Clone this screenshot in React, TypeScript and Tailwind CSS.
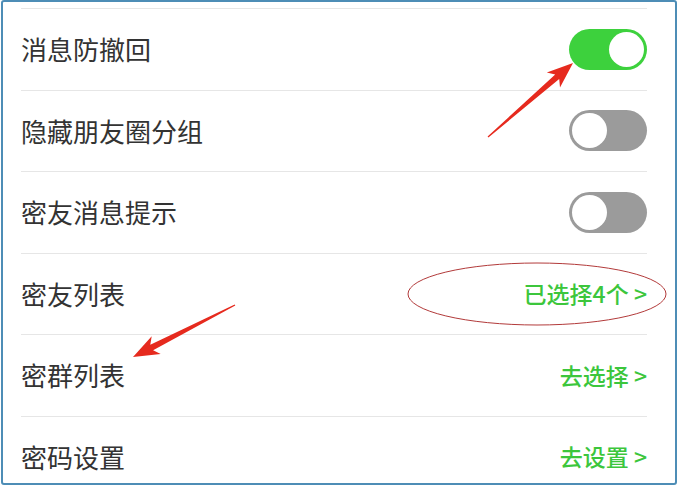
import React from 'react';

type Row = {
  label: string;
  toggle?: boolean;
  action?: string;
};

const rows: Row[] = [
  { label: '消息防撤回', toggle: true },
  { label: '隐藏朋友圈分组', toggle: false },
  { label: '密友消息提示', toggle: false },
  { label: '密友列表', action: '已选择4个' },
  { label: '密群列表', action: '去选择' },
  { label: '密码设置', action: '去设置' },
];

const Toggle: React.FC<{ on: boolean }> = ({ on }) =>
  on ? (
    <div className="w-[78px] h-[41px] rounded-full bg-[#3dd13d] flex items-center justify-end pr-[3px]">
      <div className="w-[35px] h-[35px] rounded-full bg-white" />
    </div>
  ) : (
    <div className="w-[78px] h-[41px] rounded-full bg-[#9b9b9b] flex items-center justify-start pl-[3px]">
      <div className="w-[35px] h-[35px] rounded-full bg-white" />
    </div>
  );

export default function App() {
  return (
    <div className="w-[678px] h-[487px] bg-white overflow-hidden">
      <div
        className="relative w-[676px] h-[485px] ml-[1px] border-2 border-[#4d8db6] rounded-[3px] overflow-hidden pt-[6px] pl-[18px] pr-[28px]"
        style={{ fontFamily: '"Noto Sans CJK SC", "Noto Sans", sans-serif' }}
      >
        {rows.map((r) => (
          <div
            key={r.label}
            className="h-[81.5px] border-t border-[#e6e6e6] flex items-center justify-between"
          >
            <span className="text-[26px] text-[#333333] leading-none">{r.label}</span>
            {r.toggle !== undefined ? (
              <Toggle on={r.toggle} />
            ) : (
              <span className="text-[23px] font-medium text-[#3cc63c] leading-none">
                {r.action} &gt;
              </span>
            )}
          </div>
        ))}

        <svg
          className="absolute left-[-2px] top-[-2px] pointer-events-none"
          width="678"
          height="487"
          viewBox="0 0 678 487"
        >
          <ellipse cx="536" cy="294" rx="129" ry="31" fill="none" stroke="#b23a3a" strokeWidth="1" />
          <polygon
            points="487.4,137.5 558.2,79.1 559,87.6 572,63 545.8,72.6 554.2,74.5 486.6,136.5"
            fill="#e62a1e"
          />
          <polygon
            points="234.3,305.5 152.1,350.2 159.7,354.1 132,357 150.7,336.3 149.3,344.8 233.7,304.5"
            fill="#e62a1e"
          />
        </svg>
      </div>
    </div>
  );
}
